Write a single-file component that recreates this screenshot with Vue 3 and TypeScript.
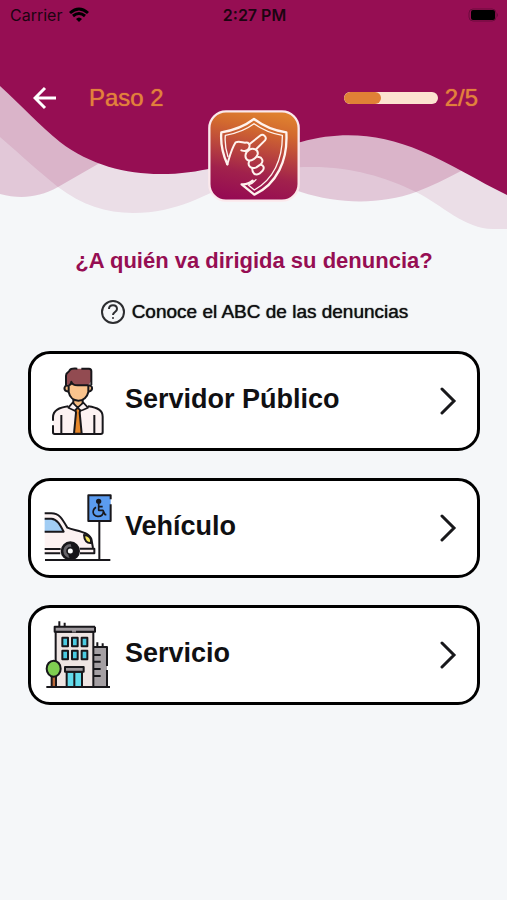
<script setup lang="ts">
interface Option {
  id: 'servidor' | 'vehiculo' | 'servicio'
  label: string
}

const step = 2
const totalSteps = 5
const progress = `${(step / totalSteps) * 100}%`

const options: Option[] = [
  { id: 'servidor', label: 'Servidor Público' },
  { id: 'vehiculo', label: 'Vehículo' },
  { id: 'servicio', label: 'Servicio' },
]
</script>

<template>
  <div class="screen">
    <header class="hero">
      <svg class="waves" viewBox="0 0 507 232" preserveAspectRatio="none" aria-hidden="true">
        <path
          class="wave-soft"
          d="M0 137 C22 156 38 171 58 187 C82 205 106 213 133 213 C178 213 203 195 240 180 C262 171 282 167 312 167 C352 167 385 177 416 192 C442 205 465 229 493 229 L507 229 V0 H0Z"
        />
        <path
          class="wave-mid"
          d="M0 194 C20 199 38 198 58 187 L98 164 C150 140 180 140 215 155 C245 168 270 182 301 192 C338 204 380 205 416 192 C432 186 446 179 461 171 L461 0 H0Z"
        />
        <path
          class="wave-dark"
          d="M0 86 C22 106 40 126 60 142 C90 165 126 174 160 174 C222 174 247 152 301 142 C345 130 382 135 421 151 C450 163 478 181 507 195 V0 H0Z"
        />
      </svg>

      <div class="status">
        <div class="carrier">
          <span>Carrier</span>
          <svg width="20" height="16" viewBox="0 0 20 16" aria-hidden="true">
            <path d="M1 6 Q10 -2 19 6" />
            <path d="M4 9 Q10 4 16 9" />
            <path class="dot" d="M7 12 Q10 9 13 12 L10 15Z" />
          </svg>
        </div>
        <span class="clock">2:27 PM</span>
        <svg class="battery" width="31" height="14" viewBox="0 0 31 14" aria-hidden="true">
          <rect class="case" x="1" y="1" width="27" height="12" rx="4" />
          <rect x="3" y="2" width="24" height="10" rx="2" />
          <path d="M29 5 Q31 7 29 9Z" class="cap" />
        </svg>
      </div>

      <nav class="toolbar">
        <button class="back" type="button" aria-label="Atrás">
          <svg width="24" height="24" viewBox="0 0 24 24" aria-hidden="true">
            <path d="M23 12 H2 M12 2 L2 12 L12 22" />
          </svg>
        </button>
        <span class="step">Paso {{ step }}</span>
        <div class="progress">
          <div class="track"><div class="fill" :style="{ width: progress }"></div></div>
          <span>{{ step }}/{{ totalSteps }}</span>
        </div>
      </nav>

      <svg class="logo" viewBox="24 29 276 276" aria-hidden="true">
        <defs>
          <linearGradient id="tile" x1="0.6" y1="0" x2="0.4" y2="1">
            <stop offset="0" stop-color="#df812f" />
            <stop offset="0.2" stop-color="#d2692f" />
            <stop offset="0.7" stop-color="#a1214c" />
            <stop offset="1" stop-color="#960b53" />
          </linearGradient>
        </defs>
        <rect x="28" y="33" width="268" height="268" rx="50" fill="url(#tile)" stroke="#fbe9ec" stroke-width="7" />
        <g fill="none" stroke="#fff3ee" stroke-width="7" stroke-linejoin="round" stroke-linecap="round">
          <path d="M82 192 C69 163 61 130 64 96 C103 90 133 78 162 56 C190 77 221 91 259 96 C264 181 230 251 163 283 L125 252 C137 253 149 249 158 241" />
          <path d="M82 192 C88 172 93 148 107 126 C117 122 125 126 135 127 C146 125 151 132 148 142 C144 153 135 154 124 150" stroke-width="6" />
          <path d="M84 169 C76 145 74 126 76 105 C108 99 137 89 162 70 C187 88 213 99 247 105 C248 177 220 238 163 269 L145 254 C153 251 161 246 168 238" stroke-width="4" />
          <path d="M148 132 L180 106 C190 98 202 111 195 120 L169 146" stroke-width="6" />
          <path d="M147 149 C134 156 133 174 144 180 C155 183 169 173 173 162 C176 147 159 141 147 149" stroke-width="6" />
          <path d="M148 182 C141 196 153 208 169 201 L182 192 C193 183 185 168 174 170" stroke-width="6" />
          <path d="M157 204 C156 219 165 226 178 220 L187 212 C195 203 190 194 183 193" stroke-width="6" />
        </g>
      </svg>
    </header>

    <main class="content">
      <h1>¿A quién va dirigida su denuncia?</h1>
      <a class="help" href="#abc">
        <svg width="26" height="26" viewBox="0 0 26 26" aria-hidden="true">
          <circle cx="13" cy="13" r="11" />
          <path d="M9 10 C9 5 17 5 17 10 C17 13 13 13 13 16" />
          <circle class="point" cx="13" cy="19" r="1" />
        </svg>
        <span>Conoce el ABC de las denuncias</span>
      </a>

      <div class="options">
        <button v-for="option in options" :key="option.id" class="card" type="button">
          <svg v-if="option.id === 'servidor'" class="picture" viewBox="66 75 216 216" aria-hidden="true">
            <path d="M99 282 V230 C99 211 117 203 142 198 L158 187 H188 L207 199 C235 203 248 212 248 230 V282Z" fill="#fcf2f2" stroke="none" />
            <path d="M160 177 H188 V194 L174 208 L160 194Z" fill="#f5bd83" />
            <path d="M145 137 C132 134 130 149 139 153 L147 155 M205 137 C218 134 219 149 211 153 L204 155" fill="#f5bd83" />
            <path d="M146 130 V156 C149 172 161 182 175 182 C190 182 202 171 205 156 V130Z" fill="#fac48d" />
            <path d="M145 136 L138 128 V106 C137 96 146 97 149 91 C154 83 161 86 172 86 H207 Q214 86 214 94 V123 L205 136 H164 L155 126 C154 134 150 136 145 136Z" fill="#924b51" stroke="none" />
            <path d="M138 135 V107 C138 96 147 98 149 91 C153 84 161 86 172 86 M184 86 H207 Q214 86 214 94 V135 M146 135 C154 135 154 125 154 125 C157 135 163 136 173 136 H205" />
            <path d="M165 205 H182 L179 218 L185 281 H162 L168 218Z" fill="#e6872b" />
            <path d="M145 203 L158 188 L173 203 L164 212 L158 209Z M204 203 L190 188 L173 203 L182 212 L190 209Z" fill="#fcf2f2" stroke-width="5" />
            <path d="M99 242 V232 C99 210 118 203 145 199 M204 199 C234 203 248 211 248 230 V277 Q248 282 242 282 H104 Q99 282 99 277 V256 M124 225 V281 M223 225 V281" />
          </svg>

          <svg v-else-if="option.id === 'vehiculo'" class="picture" viewBox="66 66 216 216" aria-hidden="true">
            <path d="M74 130 H99 C117 131 129 147 143 172 L180 183 C205 190 215 204 218 234 L223 250 H74Z" fill="#fcf2f2" stroke="none" />
            <path d="M74 146 H94 C111 147 120 163 131 185 H74" fill="#a1cdf4" />
            <path d="M74 130 H94 C118 130 126 145 142 173 C171 184 204 184 214 207 L219 234" />
            <path d="M74 237 H122 M74 250 H121 M180 250 H223 V236 H179" />
            <path d="M192 195 C207 195 216 205 213 219 C201 220 193 213 192 195Z" fill="#f5e75d" />
            <circle cx="151" cy="243" r="25" fill="#68666b" stroke-width="8" />
            <path d="M151 218 A25 25 0 0 1 151 268 L145 257 L157 243Z" fill="#151418" stroke="none" />
            <circle cx="151" cy="243" r="10" fill="#fff" stroke-width="5" />
            <path d="M238 154 V269 M75 270 H271" />
            <path d="M272 88 V76 H205 V153 H272 V103" fill="#5b9cf0" />
            <circle cx="236" cy="94" r="5" fill="#141922" />
            <path d="M236 101 V121 H249 L255 134 H259 M237 110 H248 M228 112 C215 120 217 137 233 139 C244 140 250 134 250 125" stroke-width="5" />
          </svg>

          <svg v-else class="picture" viewBox="66 63 216 216" aria-hidden="true">
            <path d="M221 147 H261 V267 H221Z" fill="#a49fa3" stroke="none" />
            <path d="M221 147 H261 V204 M261 216 V267 M232 133 V147 M248 136 V147 M221 171 H242 M221 191 H242 M221 213 H242 M221 234 H242" />
            <path d="M107 101 H220 V267 H107Z" fill="#eee5e3" />
            <path d="M104 86 H225 V101 H104Z" fill="#9f9a9e" stroke="none" />
            <path d="M225 86 H104 V101 H156 M168 101 H225 V86" />
            <path d="M118 70 V86 M134 74 V86" />
            <path d="M127 119 H144 V145 H127Z M156 119 H173 V145 H156Z M185 119 H202 V145 H185Z M127 158 H144 V184 H127Z M156 158 H173 V184 H156Z M185 158 H202 V184 H185Z" fill="#4acbe1" />
            <path d="M140 221 H186 V267 H140Z M163 221 V267" fill="#63dcec" />
            <path d="M135 207 H191 V221 H135Z" fill="#9f9a9e" />
            <path d="M95 231 H108 V267 H95Z" fill="#b96738" />
            <ellipse cx="101" cy="212" rx="21" ry="24" fill="#7fce51" />
            <path d="M79 267 H270" />
          </svg>

          <span class="label">{{ option.label }}</span>
          <svg class="chevron" width="18" height="28" viewBox="0 0 18 28" aria-hidden="true">
            <path d="M3 2 L15 14 L3 26" />
          </svg>
        </button>
      </div>
    </main>
  </div>
</template>

<style>
body {
  background: #f5f7f9;
}
</style>

<style scoped>
.screen {
  min-height: 100vh;
  background: #f5f7f9;
  color: #101012;
  font-family: 'Liberation Sans', Arial, sans-serif;
}

.hero {
  position: relative;
  display: flex;
  flex-direction: column;
  height: 232px;
}

.waves {
  position: absolute;
  inset: 0;
  width: 100%;
  height: 100%;
}

.wave-soft {
  fill: #960e53;
  fill-opacity: 0.1;
}

.wave-mid {
  fill: #960e53;
  fill-opacity: 0.2;
}

.wave-dark {
  fill: #960e53;
}

.status,
.toolbar,
.logo {
  position: relative;
}

.status {
  display: grid;
  grid-template-columns: 1fr auto 1fr;
  align-items: center;
  height: 30px;
  padding: 0 8px 0 10px;
  color: #1c0411;
  font: 16px/20px Inter, sans-serif;
}

.carrier {
  display: flex;
  align-items: center;
  gap: 7px;
}

.carrier path {
  fill: none;
  stroke: #000;
  stroke-width: 3;
}

.carrier .dot {
  fill: #000;
  stroke: none;
}

.clock {
  font-weight: 600;
}

.battery {
  justify-self: end;
}

.battery .case {
  fill: none;
  stroke: #6b0a3c;
}

.battery .cap {
  fill: #6b0a3c;
}

.toolbar {
  display: flex;
  align-items: center;
  height: 32px;
  margin-top: 52px;
  padding: 0 29px 0 33px;
  color: #e2813c;
  font-size: 24px;
  line-height: 28px;
  text-shadow: 0 0 1px currentColor;
}

.back {
  display: flex;
  padding: 0;
  border: 0;
  background: none;
  cursor: pointer;
}

.back path {
  fill: none;
  stroke: #fff;
  stroke-width: 3;
}

.step {
  margin-left: 32px;
}

.progress {
  display: flex;
  align-items: center;
  gap: 7px;
  margin-left: auto;
}

.track {
  width: 94px;
  height: 12px;
  border-radius: 6px;
  background: #fce3d0;
  overflow: hidden;
}

.fill {
  height: 100%;
  border-radius: 6px;
  background: #e08136;
}

.logo {
  align-self: center;
  width: 92px;
  height: 92px;
  margin-top: -4px;
}

.content {
  display: flex;
  flex-direction: column;
  align-items: center;
  padding: 15px 27px 32px 28px;
}

h1 {
  margin: 0;
  color: #960e53;
  font-size: 22px;
  line-height: 28px;
  text-align: center;
}

.help {
  display: flex;
  align-items: center;
  gap: 6px;
  margin-top: 24px;
  color: #101012;
  font-size: 19px;
  line-height: 26px;
  text-decoration: none;
  text-shadow: 0 0 1px currentColor;
}

.help svg {
  fill: none;
  stroke: #2c2d30;
  stroke-width: 2;
}

.help .point {
  fill: #2c2d30;
  stroke: none;
}

.options {
  display: flex;
  flex-direction: column;
  gap: 27px;
  width: 100%;
  margin-top: 26px;
}

.card {
  display: flex;
  align-items: center;
  width: 100%;
  height: 100px;
  padding: 0 20px 0 11px;
  border: 3px solid #000;
  border-radius: 22px;
  background: #fff;
  color: #101012;
  font-family: inherit;
  text-align: left;
  cursor: pointer;
}

.picture {
  flex: none;
  width: 72px;
  height: 72px;
  fill: none;
  stroke: #18171b;
  stroke-width: 6;
  stroke-linejoin: round;
}

.label {
  flex: 1;
  margin-left: 11px;
  padding-bottom: 4px;
  font-size: 27px;
  font-weight: 700;
  line-height: 32px;
}

.chevron {
  fill: none;
  stroke: #18181b;
  stroke-width: 3;
  stroke-linecap: round;
}
</style>
